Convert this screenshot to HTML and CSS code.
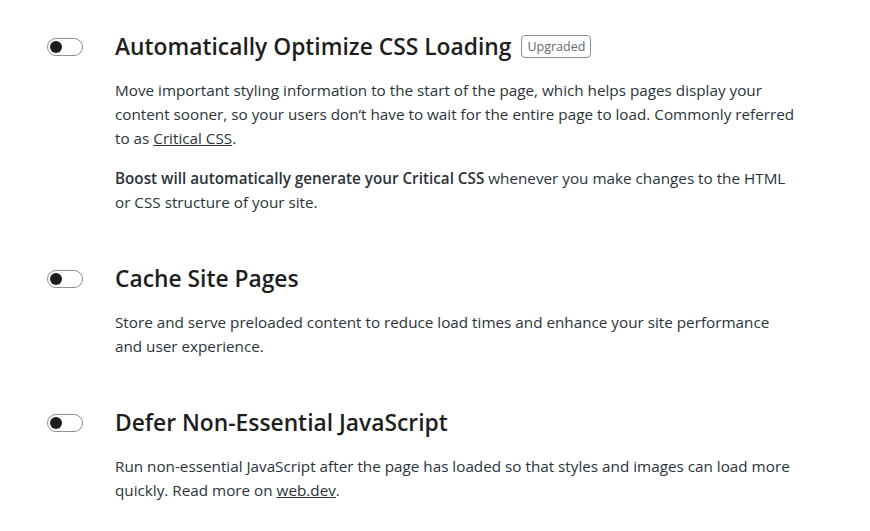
FILE: index.html
```html
<!DOCTYPE html>
<html>
<head>
<meta charset="utf-8">
<link rel="stylesheet" href="styles.css">
</head>
<body>
<main class="modules">
  <section class="module">
    <div class="toggle"><span class="knob"></span></div>
    <div class="content">
      <h3 class="title">Automatically Optimize CSS Loading <span class="badge">Upgraded</span></h3>
      <p class="desc">Move important styling information to the start of the page, which helps pages display your content sooner, so your users don’t have to wait for the entire page to load. Commonly referred to as <a href="#">Critical CSS</a>.</p>
      <p class="desc"><strong>Boost will automatically generate your Critical CSS</strong> whenever you make changes to the HTML or CSS structure of your site.</p>
    </div>
  </section>
  <section class="module">
    <div class="toggle"><span class="knob"></span></div>
    <div class="content">
      <h3 class="title">Cache Site Pages</h3>
      <p class="desc">Store and serve preloaded content to reduce load times and enhance your site performance and user experience.</p>
    </div>
  </section>
  <section class="module">
    <div class="toggle"><span class="knob"></span></div>
    <div class="content">
      <h3 class="title">Defer Non-Essential JavaScript</h3>
      <p class="desc">Run non-essential JavaScript after the page has loaded so that styles and images can load more quickly. Read more on <a href="#">web.dev</a>.</p>
    </div>
  </section>
</main>
</body>
</html>
```
FILE: styles.css
```css
* { box-sizing: border-box; }
html, body { margin: 0; background: #fff; }
body {
  font-family: "Open Sans", "Noto Sans", sans-serif;
  color: #2c3338;
}
.modules {
  padding: 31px 0 0 47px;
  display: flex;
  flex-direction: column;
  gap: 49px;
}
.module {
  display: flex;
  align-items: flex-start;
}
.toggle {
  flex: 0 0 36px;
  width: 36px;
  height: 18px;
  margin-top: 7px;
  border: 1.5px solid #8c8f94;
  border-radius: 10px;
  position: relative;
  background: #fff;
}
.knob {
  position: absolute;
  left: 1.5px;
  top: 1.5px;
  width: 12px;
  height: 12px;
  border-radius: 50%;
  background: #1e1e1e;
}
.content {
  margin-left: 32px;
  width: 682px;
}
.title {
  margin: 0;
  font-size: 22.8px;
  line-height: 32px;
  font-weight: 600;
  color: #1e1e1e;
  display: flex;
  align-items: center;
  gap: 10px;
}
.badge {
  font-size: 12.5px;
  line-height: 19px;
  font-weight: 400;
  color: #646970;
  border: 1px solid #8c8f94;
  border-radius: 4px;
  padding: 1px 5px;
  margin-top: -2px;
}
.desc {
  margin: 15px 0 0;
  font-size: 15.25px;
  line-height: 24px;
}
.desc + .desc { margin-top: 16px; }
.desc a { color: inherit; text-decoration: underline; }
.desc strong { font-weight: 600; }
```
